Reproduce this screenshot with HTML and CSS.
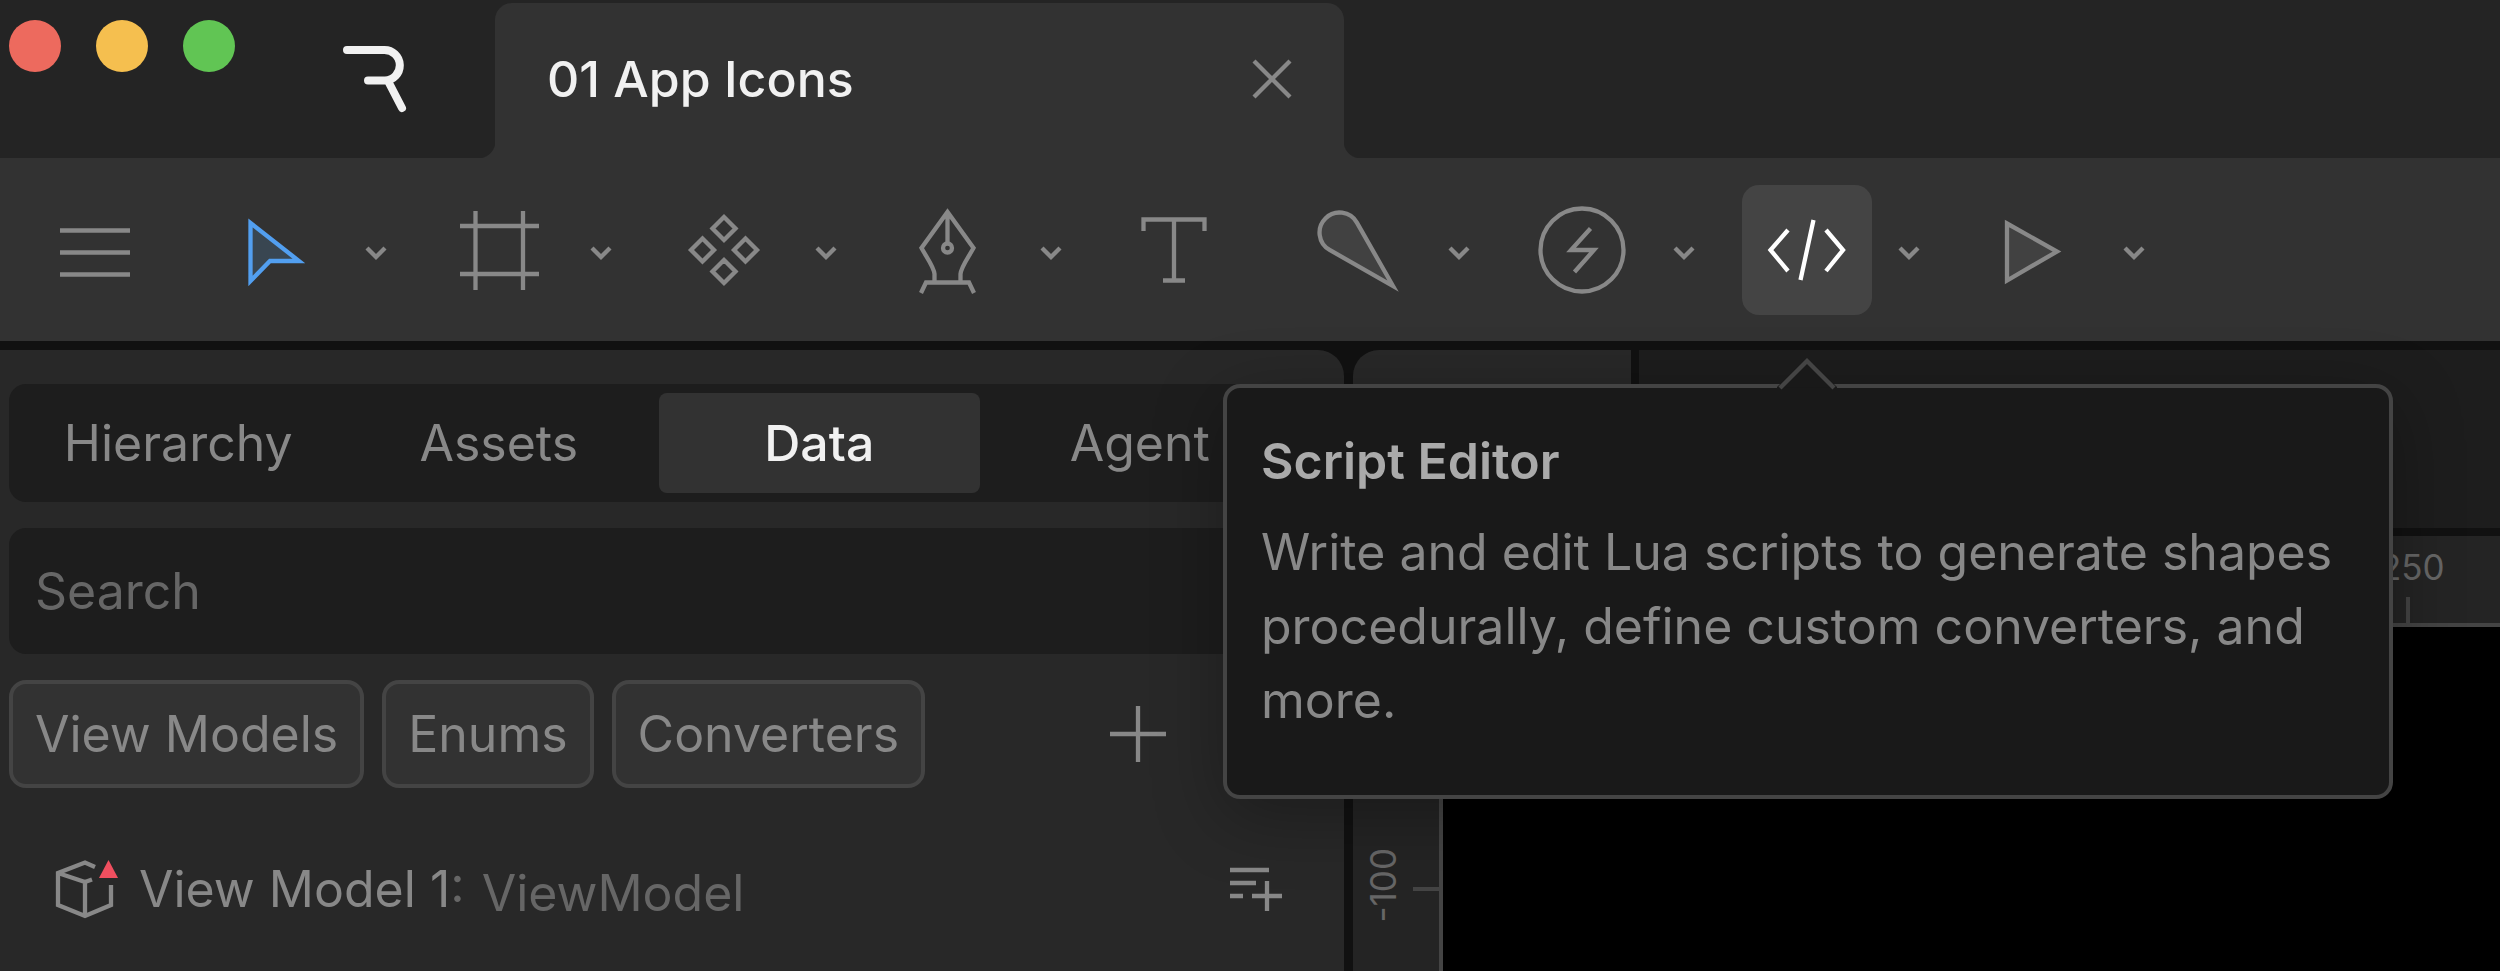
FILE: index.html
```
<!DOCTYPE html>
<html lang="en">
<head>
<meta charset="UTF-8">
<meta name="viewport" content="width=device-width, initial-scale=1.0">
<title>01 App Icons</title>
<link rel="stylesheet" href="styles.css">
</head>
<body>
    <header class="titlebar">
        <div class="lights">
            <button class="light red" aria-label="Close window"></button>
            <button class="light yellow" aria-label="Minimize window"></button>
            <button class="light green" aria-label="Zoom window"></button>
        </div>
        <a class="logo" href="#" aria-label="Home">
            <svg width="66" height="68" viewBox="0 0 66 68"><path d="M6 5H43A15.300 15.300 0 0 1 44 35.600H27M47 36L61 63"/></svg>
        </a>
        <div class="file-tab">
            <span>01 App Icons</span>
            <button class="close" aria-label="Close tab">
                <svg width="40" height="40" viewBox="0 0 40 40"><path d="M2 2L38 38M38 2L2 38"/></svg>
            </button>
        </div>
    </header>

    <nav class="toolbar">
        <div class="tool-group menu">
            <button class="tool" aria-label="Menu"><svg viewBox="0 0 130 130"><path d="M30 45.500H100M30 67.500H100M30 89.500H100"/></svg></button>
        </div>
        <div class="tool-group">
            <button class="tool select" aria-label="Select"><svg viewBox="0 0 130 130"><path d="M41.500 38L90 76H61L41.500 96Z"/></svg></button>
            <button class="more" aria-label="Select options"><svg viewBox="0 0 74 130"><path d="M28 63L37 72L46 63"/></svg></button>
        </div>
        <div class="tool-group">
            <button class="tool" aria-label="Artboard"><svg viewBox="0 0 130 130"><path d="M41.500 26V105M89 26V105M26 41H105M26 89H105"/></svg></button>
            <button class="more" aria-label="Artboard options"><svg viewBox="0 0 74 130"><path d="M28 63L37 72L46 63"/></svg></button>
        </div>
        <div class="tool-group">
            <button class="tool" aria-label="Components"><svg viewBox="0 0 130 130"><path d="M65 32L76.500 43.500L65 55L53.500 43.500ZM65 75L76.500 86.500L65 98L53.500 86.500ZM43.500 53.500L55 65L43.500 76.500L32 65ZM86.500 53.500L98 65L86.500 76.500L75 65Z"/></svg></button>
            <button class="more" aria-label="Component options"><svg viewBox="0 0 74 130"><path d="M28 63L37 72L46 63"/></svg></button>
        </div>
        <div class="tool-group">
            <button class="tool" aria-label="Pen"><svg viewBox="0 0 130 130"><path d="M50.500 97V89C50 82 43 73 37.500 63L63.500 27L89.500 63C84 73 77 82 76.500 89V97M63.500 27V58M37 108L42 97.500H85L90 108"/><circle cx="63.500" cy="63" r="4.500"/></svg></button>
            <button class="more" aria-label="Pen options"><svg viewBox="0 0 74 130"><path d="M28 63L37 72L46 63"/></svg></button>
        </div>
        <div class="tool-group text-tool">
            <button class="tool" aria-label="Text"><svg viewBox="0 0 130 130"><path d="M34.500 46V34.500H95.500V46M65 34.500V95.500M54 95.500H76"/></svg></button>
        </div>
        <div class="tool-group">
            <button class="tool filled" aria-label="Bone"><svg viewBox="0 0 130 130"><path d="M101 101L64.900 37.600A20 20 0 1 0 37.600 64.900Z"/></svg></button>
            <button class="more" aria-label="Bone options"><svg viewBox="0 0 74 130"><path d="M28 63L37 72L46 63"/></svg></button>
        </div>
        <div class="tool-group">
            <button class="tool" aria-label="Events"><svg viewBox="0 0 130 130"><circle cx="65" cy="65" r="41.500"/><path d="M73.500 43.500L54 65H77L57.500 87"/></svg></button>
            <button class="more" aria-label="Event options"><svg viewBox="0 0 74 130"><path d="M28 63L37 72L46 63"/></svg></button>
        </div>
        <div class="tool-group">
            <button class="tool active" aria-label="Script Editor" aria-describedby="tip"><svg viewBox="0 0 130 130"><path d="M46 45L28.500 65L46 86M71.500 35L58.500 95M84 45L101 65L84 86"/></svg></button>
            <button class="more" aria-label="Script options"><svg viewBox="0 0 74 130"><path d="M28 63L37 72L46 63"/></svg></button>
            <div class="tooltip" id="tip" role="tooltip">
                <svg class="arrow" width="60" height="32" viewBox="0 0 60 32"><path d="M2 30L30 3L58 30V32H2Z" class="arrow-fill"/><path d="M3 30L30 3L57 30"/></svg>
                <h2>Script Editor</h2>
                <p>Write and edit Lua scripts to generate shapes procedurally, define custom converters, and more.</p>
            </div>
        </div>
        <div class="tool-group">
            <button class="tool filled" aria-label="Play"><svg viewBox="0 0 130 130"><path d="M40 38.500L90 66.500L40 95.500Z"/></svg></button>
            <button class="more" aria-label="Play options"><svg viewBox="0 0 74 130"><path d="M28 63L37 72L46 63"/></svg></button>
        </div>
    </nav>

    <main class="workspace">
        <aside class="panel">
            <div class="segments">
                <button>Hierarchy</button>
                <button>Assets</button>
                <button class="selected">Data</button>
                <button>Agent</button>
            </div>
            <input class="search" type="text" placeholder="Search" aria-label="Search">
            <div class="filters">
                <button class="filter">View Models</button>
                <button class="filter">Enums</button>
                <button class="filter">Converters</button>
                <button class="add" aria-label="Add">
                    <svg width="58" height="58" viewBox="0 0 58 58"><path d="M29 1V57M1 29H57"/></svg>
                </button>
            </div>
            <div class="row">
                <svg class="cube" width="66" height="60" viewBox="0 0 66 60">
                    <path d="M40 8L30 3.500L3 14V46L30 57L56 46V26M3 14L30 23L37 20.500M30 23V57"/>
                    <path class="alert" d="M53.500 1L63 19H44Z"/>
                </svg>
                <span class="name">View Model 1<span class="colon">:</span></span>
                <span class="type">ViewModel</span>
                <button class="add-property" aria-label="Add property">
                    <svg width="54" height="48" viewBox="0 0 54 48"><path d="M1 5H40M1 18H27M1 31H14M23 31H53M38 16V46"/></svg>
                </button>
            </div>
        </aside>
        <section class="stage">
            <div class="stage-tabs">
                <div class="stage-tab"></div>
                <div class="stage-strip"></div>
            </div>
            <div class="rulers">
                <div class="ruler-corner"></div>
                <div class="ruler-top"><span class="mark-x">250</span></div>
                <div class="ruler-left"><span class="mark-y">-100</span></div>
                <div class="canvas"></div>
            </div>
        </section>
    </main>
</body>
</html>
```
FILE: styles.css
```
* {
    box-sizing: border-box;
}
body {
    margin: 0;
    min-height: 100vh;
    display: flex;
    flex-direction: column;
    background-color: #111111;
    color: #888888;
    font-family: Inter, "Liberation Sans", sans-serif;
    font-size: 50px;
    line-height: 74px;
    overflow: hidden;
}
button, input {
    padding: 0;
    border: none;
    background: none;
    color: inherit;
    font: inherit;
    outline: none;
}
button {
    cursor: pointer;
}
svg {
    display: block;
    fill: none;
    stroke: #888888;
    stroke-width: 4.3;
}

/* title bar */
.titlebar {
    display: flex;
    height: 158px;
    background-color: #242424;
}
.lights {
    display: flex;
    gap: 35px;
    padding: 20px 0 0 9px;
}
.light {
    width: 52px;
    height: 52px;
    border-radius: 50%;
}
.red {
    background-color: #ed6a5e;
}
.yellow {
    background-color: #f5bf4f;
}
.green {
    background-color: #61c554;
}
.logo {
    margin: 45px 88px 0 106px;
}
.logo svg {
    stroke: #f1f1f1;
    stroke-width: 8;
    stroke-linecap: round;
}
.file-tab {
    position: relative;
    display: flex;
    align-items: center;
    justify-content: space-between;
    width: 849px;
    margin-top: 3px;
    padding: 0 52px 3px;
    border-radius: 17px 17px 0 0;
    background-color: #323232;
    color: #f1f1f1;
    font-weight: 500;
}
.file-tab::before,
.file-tab::after {
    content: "";
    position: absolute;
    bottom: 0;
    width: 17px;
    height: 17px;
}
.file-tab::before {
    right: 100%;
    background: radial-gradient(circle at 0 0, #242424 17px, #323232 18px);
}
.file-tab::after {
    left: 100%;
    background: radial-gradient(circle at 100% 0, #242424 17px, #323232 18px);
}

/* toolbar */
.toolbar {
    display: flex;
    gap: 21px;
    height: 183px;
    padding: 27px 30px;
    background-color: #323232;
}
.tool-group {
    position: relative;
    display: flex;
}
.menu {
    margin-right: 28px;
}
.text-tool {
    margin-right: 32px;
}
.tool {
    width: 130px;
    height: 130px;
    border-radius: 17px;
}
.more {
    width: 74px;
    height: 130px;
}
.select svg {
    fill: #394651;
    stroke: #529ff0;
}
.filled svg {
    fill: #414141;
}
.active {
    background-color: #444444;
}
.active svg {
    stroke: #ffffff;
}

/* tooltip */
.tooltip {
    position: absolute;
    z-index: 2;
    top: 199px;
    left: -519px;
    width: 1170px;
    padding: 36px 34px 58px;
    border: 4px solid #444444;
    border-radius: 17px;
    background-color: #191919;
    box-shadow: 0 17px 70px rgba(0, 0, 0, 0.3);
}
.tooltip h2 {
    margin: 0 0 17px;
    color: #aaaaaa;
    font-size: 50px;
    font-weight: 600;
}
.tooltip p {
    margin: 0;
}
.arrow {
    position: absolute;
    top: -30px;
    left: 550px;
    stroke: #444444;
}
.arrow .arrow-fill {
    fill: #191919;
    stroke: #191919;
}

/* data panel */
.workspace {
    flex: 1;
    display: flex;
    gap: 9px;
    padding-top: 9px;
}
.panel {
    display: flex;
    flex-direction: column;
    gap: 26px;
    width: 1344px;
    padding: 34px 35px 0 9px;
    border-radius: 0 26px 0 0;
    background-color: #282828;
}
.segments {
    display: grid;
    grid-template-columns: repeat(4, 1fr);
    padding: 9px;
    border-radius: 17px;
    background-color: #1d1d1d;
}
.segments button {
    height: 100px;
    border-radius: 8px;
}
.segments .selected {
    background-color: #323232;
    color: #f1f1f1;
    font-weight: 500;
}
.search {
    height: 126px;
    padding: 0 26px;
    border-radius: 17px;
    background-color: #1d1d1d;
}
.search::placeholder {
    color: #666666;
    opacity: 1;
}
.filters {
    display: flex;
    align-items: center;
    gap: 18px;
}
.filter {
    height: 108px;
    padding: 0 22px;
    border: 4px solid #444444;
    border-radius: 17px;
    background-color: #323232;
}
.add {
    margin: 0 142px 0 auto;
}
.row {
    display: flex;
    align-items: center;
    padding: 34px 26px 0 46px;
}
.cube {
    margin-right: 18px;
}
.alert {
    fill: #f04f5f;
    stroke: none;
}
.colon {
    color: #666666;
}
.type {
    margin: 8px 0 0 17px;
    color: #666666;
}
.add-property {
    margin-left: auto;
}

/* stage */
.stage {
    flex: 1;
    display: flex;
    flex-direction: column;
    gap: 8px;
}
.stage-tabs {
    display: flex;
    gap: 8px;
    height: 178px;
}
.stage-tab {
    width: 278px;
    border-radius: 26px 0 0 0;
    background-color: #282828;
}
.stage-strip {
    flex: 1;
    background-color: #1d1d1d;
}
.rulers {
    flex: 1;
    display: grid;
    grid-template-columns: 90px 1fr;
    grid-template-rows: 91px 1fr;
    font-size: 35px;
    line-height: 40px;
    color: #666666;
}
.ruler-corner,
.ruler-top,
.ruler-left {
    position: relative;
    background-color: #242424;
}
.ruler-top {
    border-bottom: 4px solid #444444;
}
.ruler-left {
    border-right: 4px solid #444444;
}
.mark-x {
    position: absolute;
    top: 11px;
    left: 937px;
}
.mark-x::after {
    content: "";
    position: absolute;
    top: 50px;
    left: 26px;
    width: 4px;
    height: 26px;
    background-color: #444444;
}
.mark-y {
    position: absolute;
    top: 221px;
    left: 10px;
    writing-mode: vertical-rl;
    transform: rotate(180deg);
}
.ruler-left::after {
    content: "";
    position: absolute;
    top: 260px;
    right: 0;
    width: 26px;
    height: 4px;
    background-color: #444444;
}
.canvas {
    background-color: #000000;
}
```
